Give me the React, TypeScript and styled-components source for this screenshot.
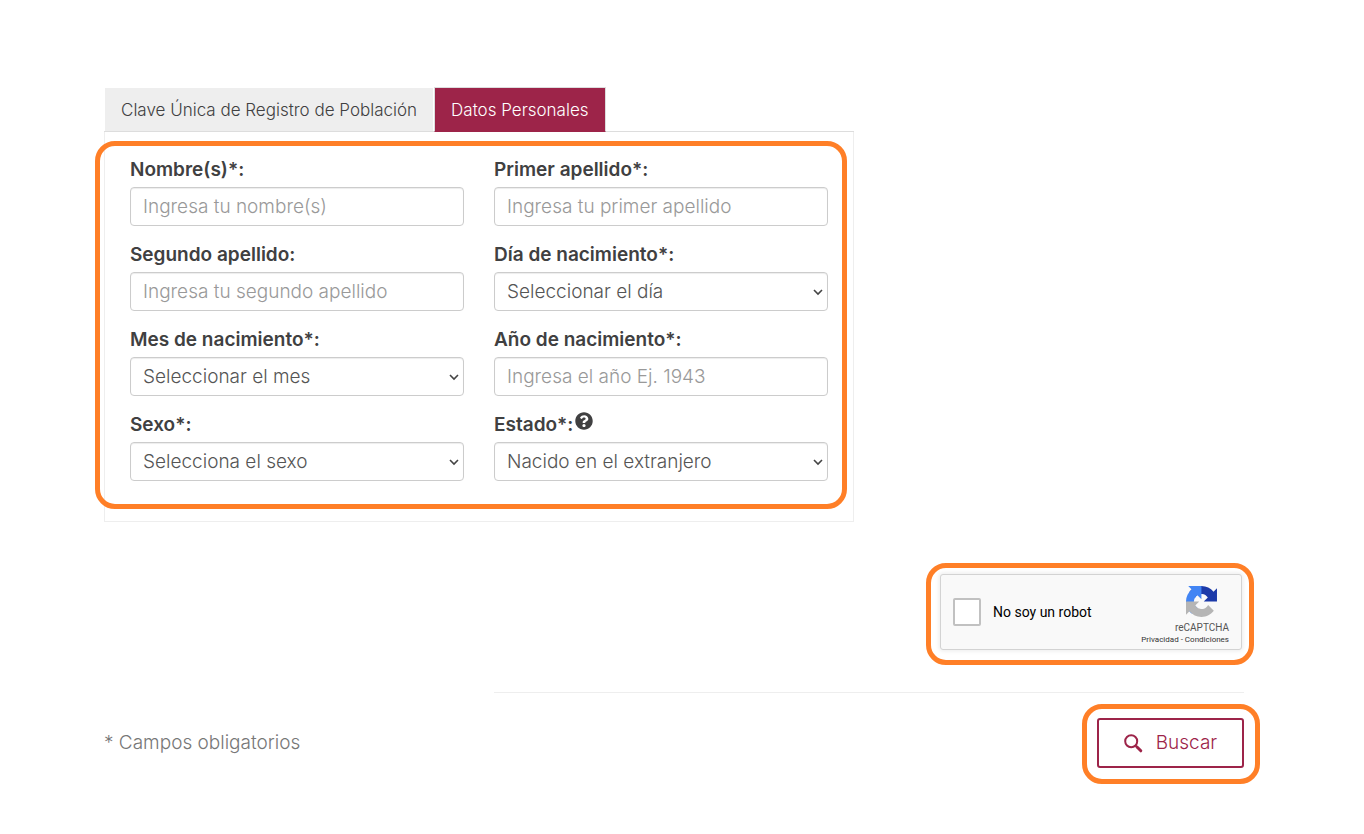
import React from "react";
import styled, { createGlobalStyle } from "styled-components";
import { FaQuestionCircle } from "react-icons/fa";

const GlobalStyle = createGlobalStyle`
  *, *::before, *::after { box-sizing: border-box; }
  body {
    margin: 0;
    background: #fff;
    color: #404041;
    font-family: Inter, "Open Sans", sans-serif;
    font-size: 19px;
    font-weight: 300;
    line-height: 26px;
  }
`;

const wine = "#9d2449";
const orange = "#ff7f27";

const Page = styled.main`
  padding: 87px 120px 60px 104px;
`;

const Columns = styled.div`
  display: grid;
  grid-template-columns: 750fr 390fr;
`;

const TabList = styled.div`
  display: flex;
  height: 45px;
  border-bottom: 1px solid #ddd;
`;

const Tab = styled.button<{ $active?: boolean }>`
  height: 45px;
  padding: 0 16px;
  border: 1px solid ${(p) => (p.$active ? "#ddd" : "transparent")};
  border-bottom-color: ${(p) => (p.$active ? wine : "transparent")};
  background: ${(p) => (p.$active ? wine : "#eee")};
  background-clip: padding-box;
  color: ${(p) => (p.$active ? "#fff" : "#404041")};
  font: inherit;
  font-size: 17px;
  white-space: nowrap;
  cursor: pointer;
`;

const Panel = styled.form`
  position: relative;
  display: grid;
  grid-template-columns: 1fr 1fr;
  gap: 16px 30px;
  padding: 25px 25px 40px;
  border: 1px solid #eee;
  border-top: 0;
`;

const Highlight = styled.span<{ $inset: string }>`
  position: absolute;
  inset: ${(p) => p.$inset};
  border: 5px solid ${orange};
  border-radius: 20px;
  pointer-events: none;
`;

const Field = styled.div`
  display: flex;
  flex-direction: column;
  gap: 5px;
  min-width: 0;
`;

const Label = styled.label`
  display: flex;
  align-items: center;
  gap: 2px;
  height: 25px;
  font-weight: 600;

  svg { align-self: flex-start; }
`;

const control = `
  width: 100%;
  height: 39px;
  padding: 0 12px;
  border: 1px solid #ccc;
  border-radius: 4px;
  background-color: #fff;
  box-shadow: inset 0 1px 1px rgba(0, 0, 0, 0.075);
  color: #555;
  font: inherit;
`;

const TextInput = styled.input`
  ${control}
  &::placeholder { color: #999; opacity: 1; }
`;

const Select = styled.select`
  ${control}
  appearance: none;
`;

const SelectBox = styled.div`
  position: relative;
  display: flex;

  svg {
    position: absolute;
    top: 17px;
    right: 5px;
    pointer-events: none;
  }
`;

const CaptchaRow = styled.section`
  display: flex;
  justify-content: flex-end;
  padding: 52px 2px 42px 0;
`;

const Captcha = styled.div`
  position: relative;
  display: flex;
  align-items: center;
  width: 302px;
  height: 76px;
  padding: 0 12px;
  border: 1px solid #d3d3d3;
  border-radius: 3px;
  background: #f9f9f9;
  box-shadow: 0 0 4px 1px rgba(0, 0, 0, 0.08);
  font-family: Roboto, sans-serif;
  font-weight: 400;
`;

const Check = styled.input`
  appearance: none;
  width: 28px;
  height: 28px;
  margin: 0 12px 0 0;
  border: 2px solid #c1c1c1;
  border-radius: 2px;
  background: #fff;
`;

const CheckLabel = styled.label`
  flex: 1;
  color: #000;
  font-size: 14px;
  line-height: 17px;
`;

const Brand = styled.div`
  display: flex;
  flex-direction: column;
  align-items: flex-end;
  align-self: flex-end;
  padding-bottom: 4px;
  color: #555;
  font-size: 10px;
  line-height: 12px;

  svg { margin: 0 12px 5px 0; }
`;

const Legal = styled.div`
  font-size: 8px;
  line-height: 11px;
  color: #333;
  a { color: inherit; text-decoration: none; }
`;

const Rule = styled.hr`
  width: calc(100% * 750 / 1140);
  margin: 0 0 0 auto;
  border: 0;
  border-top: 1px solid #eee;
`;

const Footer = styled.footer`
  display: flex;
  align-items: center;
  justify-content: space-between;
  padding-top: 25px;
  color: #777;
`;

const ButtonWrap = styled.div`
  position: relative;
`;

const SearchButton = styled.button`
  display: flex;
  align-items: center;
  justify-content: center;
  gap: 13px;
  width: 147px;
  height: 50px;
  border: 2px solid ${wine};
  border-radius: 3px;
  background: #fff;
  color: ${wine};
  font: inherit;
  cursor: pointer;
`;

type FieldSpec = { id: string; label: string; text: string; select?: boolean; help?: boolean };

const fields: FieldSpec[] = [
  { id: "nombre", label: "Nombre(s)*:", text: "Ingresa tu nombre(s)" },
  { id: "primer", label: "Primer apellido*:", text: "Ingresa tu primer apellido" },
  { id: "segundo", label: "Segundo apellido:", text: "Ingresa tu segundo apellido" },
  { id: "dia", label: "Día de nacimiento*:", text: "Seleccionar el día", select: true },
  { id: "mes", label: "Mes de nacimiento*:", text: "Seleccionar el mes", select: true },
  { id: "anio", label: "Año de nacimiento*:", text: "Ingresa el año Ej. 1943" },
  { id: "sexo", label: "Sexo*:", text: "Selecciona el sexo", select: true },
  { id: "estado", label: "Estado*:", text: "Nacido en el extranjero", select: true, help: true },
];

const Chevron = () => (
  <svg width="10" height="7" viewBox="0 0 10 7" fill="none" stroke="#444" strokeWidth="1.6" aria-hidden="true">
    <path d="M1 1l4 4 4-4" />
  </svg>
);

const CaptchaLogo = () => (
  <svg width="31" height="31" viewBox="0 0 64 64" aria-hidden="true">
    <path fill="#1c3aa9" d="M64 31.955l-.033-1.37V4.687l-7.16 7.16C50.948 4.674 42.033.093 32.05.093c-10.4 0-19.622 4.96-25.458 12.64l11.736 11.86a15.55 15.55 0 0 1 4.754-5.334c2.05-1.6 4.952-2.906 8.968-2.906.485 0 .86.057 1.135.163 4.976.393 9.288 3.14 11.828 7.124l-8.307 8.307L64 31.953" />
    <path fill="#4285f4" d="M31.862.094l-1.37.033H4.594l7.16 7.16C4.58 13.147 0 22.06 0 32.046c0 10.4 4.96 19.622 12.64 25.458L24.5 45.768a15.55 15.55 0 0 1-5.334-4.754c-1.6-2.05-2.906-4.952-2.906-8.968 0-.485.057-.86.163-1.135.393-4.976 3.14-9.288 7.124-11.828l8.307 8.307L31.86.095" />
    <path fill="#b5b5b5" d="M.001 32.045l.033 1.37v25.898l7.16-7.16c5.86 7.173 14.774 11.754 24.76 11.754 10.4 0 19.622-4.96 25.458-12.64l-11.736-11.86a15.55 15.55 0 0 1-4.754 5.334c-2.05 1.6-4.952 2.906-8.968 2.906-.485 0-.86-.057-1.135-.163-4.976-.393-9.288-3.14-11.828-7.124l8.307-8.307c-10.522.04-22.4.066-27.295-.005" />
  </svg>
);

const SearchIcon = () => (
  <svg width="19" height="19" viewBox="0 0 19 19" fill="none" stroke="currentColor" aria-hidden="true">
    <circle cx="7.2" cy="7.2" r="6" strokeWidth="2" />
    <path d="M11.4 11.4l1.6 1.6" strokeWidth="2" />
    <path d="M13 13l3.8 3.8" strokeWidth="3" strokeLinecap="round" />
  </svg>
);

export default function App() {
  return (
    <>
      <GlobalStyle />
      <Page>
        <Columns>
          <div>
            <TabList role="tablist">
              <Tab type="button" role="tab" aria-selected={false}>Clave Única de Registro de Población</Tab>
              <Tab type="button" role="tab" aria-selected $active>Datos Personales</Tab>
            </TabList>
            <Panel>
              {fields.map((f) => (
                <Field key={f.id}>
                  <Label htmlFor={f.id}>
                    {f.label}
                    {f.help && <FaQuestionCircle size={18} aria-hidden />}
                  </Label>
                  {f.select ? (
                    <SelectBox>
                      <Select id={f.id}><option>{f.text}</option></Select>
                      <Chevron />
                    </SelectBox>
                  ) : (
                    <TextInput id={f.id} type="text" placeholder={f.text} />
                  )}
                </Field>
              ))}
              <Highlight $inset="9px 6px 12px -10px" />
            </Panel>
          </div>
        </Columns>
        <CaptchaRow>
          <Captcha>
            <Check id="robot" type="checkbox" />
            <CheckLabel htmlFor="robot">No soy un robot</CheckLabel>
            <Brand>
              <CaptchaLogo />
              <span>reCAPTCHA</span>
              <Legal><a href="#privacidad">Privacidad</a> - <a href="#condiciones">Condiciones</a></Legal>
            </Brand>
            <Highlight $inset="-12px -13px -16px -15px" />
          </Captcha>
        </CaptchaRow>
        <Rule />
        <Footer>
          <span>* Campos obligatorios</span>
          <ButtonWrap>
            <SearchButton type="button"><SearchIcon />Buscar</SearchButton>
            <Highlight $inset="-14px -16px -16px -15px" />
          </ButtonWrap>
        </Footer>
      </Page>
    </>
  );
}
